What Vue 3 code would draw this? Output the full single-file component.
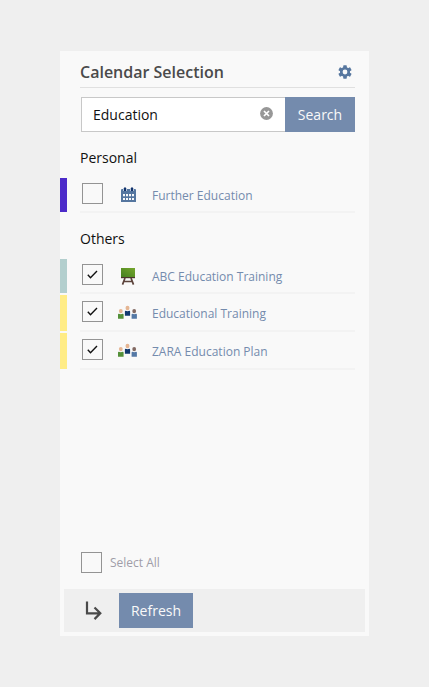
<template>
  <div class="page">
    <div class="panel">
      <header class="panel-header">
        <h1>Calendar Selection</h1>
        <svg class="gear" viewBox="0 0 14 14" width="14" height="14">
          <g fill="#57779f">
            <rect
              v-for="angle in [0, 60, 120]"
              :key="angle"
              x="5.2"
              y="0.3"
              width="3.600"
              height="13.400"
              rx="0.6"
              :transform="`rotate(${angle} 7 7)`"
            />
          </g>
          <circle cx="7" cy="7" r="3.700" fill="none" stroke="#57779f" stroke-width="2.700" />
          <circle cx="7" cy="7" r="2.400" fill="#f9f9f9" />
        </svg>
      </header>

      <div class="search">
        <div class="search-field">
          <span>{{ query }}</span>
          <svg class="clear" viewBox="0 0 13 13" width="13" height="13">
            <circle cx="6.5" cy="6.5" r="6.4" fill="#979797" />
            <path d="M4 4l5 5M9 4l-5 5" stroke="#fff" stroke-width="1.7" />
          </svg>
        </div>
        <button class="btn">Search</button>
      </div>

      <section v-for="group in groups" :key="group.title" class="group">
        <h2>{{ group.title }}</h2>
        <div
          v-for="item in group.items"
          :key="item.name"
          class="row"
          :class="{ tall: item.height > 34 }"
          :style="{ height: `${item.height}px` }"
        >
          <span class="row-color" :style="{ backgroundColor: item.color }"></span>
          <div class="row-body">
            <span class="checkbox">
              <svg v-if="item.checked" viewBox="0 0 19 19" width="19" height="19">
                <path d="M4.800 9.800l2.700 2.900L14 6" fill="none" stroke="#111" stroke-width="1.400" />
              </svg>
            </span>
            <span class="row-icon">
              <svg v-if="item.icon === 'calendar'" viewBox="0 0 20 20" width="20" height="20">
                <path fill="#55769f" d="M3 5q0-1 1-1h13q1 0 1 1v12H3z" />
                <path
                  fill="#f9f9f9"
                  d="M5 9h2v2.200H5zM8 9h2v2.200H8zM11 9h2v2.200h-2zM14 9h2v2.200h-2zM5 13h2v2H5zM8 13h2v2H8zM11 13h2v2h-2zM14 13h2v2h-2z"
                />
                <path fill="#b9c6d8" d="M5 3h4v3H5zM12 3h4v3h-4z" />
                <path fill="#12336c" d="M6 2.500h2V6H6zM13 2.500h2V6h-2z" />
              </svg>
              <svg v-else-if="item.icon === 'board'" viewBox="0 0 20 20" width="20" height="20">
                <defs>
                  <linearGradient id="board" x1="0" y1="1" x2="1" y2="0">
                    <stop offset="0" stop-color="#447f20" />
                    <stop offset="1" stop-color="#76a72d" />
                  </linearGradient>
                </defs>
                <path fill="url(#board)" d="M3 2h14v9H3z" />
                <path fill="#4b352c" d="M3 11h14v1.200H3z" />
                <path
                  d="M7 12L4.500 18.600M13 12l2.500 6.600M5.500 15.500h9"
                  fill="none"
                  stroke="#5c433b"
                  stroke-width="1.700"
                />
              </svg>
              <svg v-else viewBox="0 0 20 20" width="20" height="20">
                <ellipse cx="2.800" cy="8.100" rx="1.900" ry="2.200" fill="#e5b694" />
                <path fill="#549039" d="M0 11.500q0-.8.8-.8l2 .5 2-.5q.8 0 .8.800v4.200H0z" />
                <ellipse cx="16.200" cy="8.100" rx="1.900" ry="2.200" fill="#826962" />
                <path fill="#5478a5" d="M13.600 11.500q0-.8.8-.8l1.800.5 1.800-.5q.9 0 .9.800v4.200h-5.300z" />
                <ellipse cx="9.500" cy="5" rx="2" ry="2.200" fill="#e5b694" />
                <path fill="#12396f" d="M6.900 8.500q0-.8.8-.8l1.800.5 1.800-.5q.8 0 .8.800v4.200H6.900z" />
              </svg>
            </span>
            <span class="row-name">{{ item.name }}</span>
          </div>
        </div>
      </section>

      <div class="select-all">
        <span class="checkbox"></span>
        <span>Select All</span>
      </div>

      <footer class="panel-footer">
        <svg class="arrow" viewBox="0 0 18 20" width="18" height="20">
          <path d="M2 .5v11.800h13.500M9.500 6.500l5.800 5.800-5.800 5.800" fill="none" stroke="#4a4a4a" stroke-width="2.200" />
        </svg>
        <button class="btn">Refresh</button>
      </footer>
    </div>
  </div>
</template>

<script setup>
import { ref } from 'vue'

const query = ref('Education')

const groups = ref([
  {
    title: 'Personal',
    items: [
      { name: 'Further Education', color: '#4c2bc9', icon: 'calendar', checked: false, height: 34 }
    ]
  },
  {
    title: 'Others',
    items: [
      { name: 'ABC Education Training', color: '#b3cfce', icon: 'board', checked: true, height: 34 },
      { name: 'Educational Training', color: '#ffec86', icon: 'people', checked: true, height: 36 },
      { name: 'ZARA Education Plan', color: '#ffec86', icon: 'people', checked: true, height: 36 }
    ]
  }
])
</script>

<style>
body {
  background: #efefef;
}
</style>

<style scoped>
.page {
  box-sizing: border-box;
  height: 687px;
  padding: 51px 60px;
  font-family: 'Open Sans', 'Noto Sans', sans-serif;
}

.panel {
  display: flex;
  flex-direction: column;
  box-sizing: border-box;
  width: 309px;
  height: 585px;
  padding-bottom: 4px;
  background: #f9f9f9;
}

.panel-header {
  display: flex;
  align-items: center;
  justify-content: space-between;
  box-sizing: border-box;
  height: 37px;
  margin: 0 14px 0 20px;
  padding: 6px 3px 0 0;
  border-bottom: 1px solid #e0e0e0;
}

h1 {
  margin: 0;
  color: #4a4a4a;
  font-size: 16px;
  font-weight: 600;
  line-height: 22px;
}

.search {
  display: flex;
  height: 35px;
  margin: 9px 14px 0 21px;
}

.search-field {
  display: flex;
  flex: 1;
  align-items: center;
  justify-content: space-between;
  padding: 0 12px 0 11px;
  border: 1px solid #c8c8c8;
  border-right: 0;
  background: #fff;
  color: #111;
  font-size: 14px;
}

.clear {
  margin-top: -2px;
}

.btn {
  height: 35px;
  padding: 0;
  border: 0;
  background: #748bad;
  color: #f9f9f9;
  font-family: inherit;
  font-size: 14px;
}

.search .btn {
  width: 70px;
}

.group h2 {
  height: 20px;
  margin: 16px 0 10px 20px;
  color: #111;
  font-size: 14px;
  font-weight: 400;
  line-height: 20px;
}

.group + .group h2 {
  margin-top: 17px;
}

.row {
  display: flex;
}

.row + .row {
  margin-top: 2px;
}

.row-color {
  width: 7px;
}

.row-body {
  display: flex;
  flex: 1;
  align-items: flex-start;
  margin: 0 14px -1px 13px;
  padding: 5px 0 0 2px;
  border-bottom: 2px solid #f3f3f3;
}

.row.tall .row-body {
  padding-top: 6px;
}

.checkbox {
  display: flex;
  box-sizing: border-box;
  flex: none;
  width: 21px;
  height: 21px;
  border: 1px solid #949494;
}

.row-icon {
  width: 20px;
  height: 20px;
  margin: 2px 14px 0 15px;
}

.row-icon svg {
  display: block;
}

.row-name {
  margin-top: 4px;
  color: #748bad;
  font-size: 12px;
  line-height: 17px;
}

.select-all {
  display: flex;
  align-items: center;
  gap: 8px;
  margin: auto 0 16px 21px;
  color: #a09da8;
  font-size: 12px;
  line-height: 17px;
}

.panel-footer {
  display: flex;
  align-items: center;
  height: 43px;
  margin: 0 4px;
  padding-left: 21px;
  background: #efefef;
}

.panel-footer .btn {
  width: 74px;
  margin-left: 16px;
}
</style>
